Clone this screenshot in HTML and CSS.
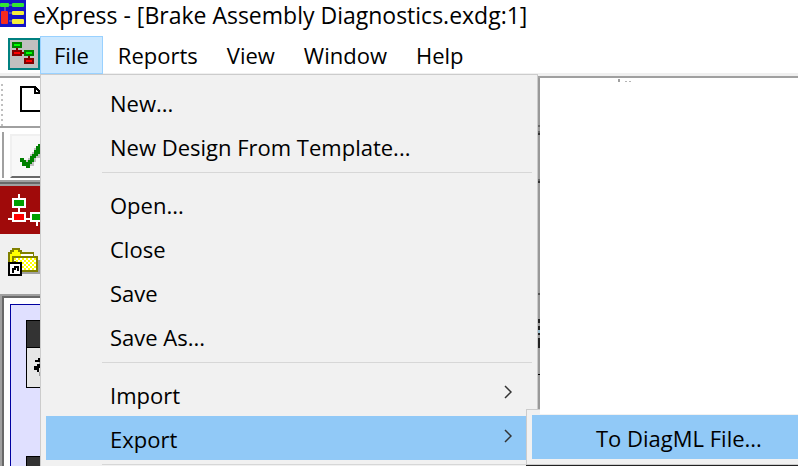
FILE: index.html
```html
<!DOCTYPE html>
<html lang="en">
<head>
    <meta charset="UTF-8">
    <meta name="viewport" content="width=device-width, initial-scale=1.0">
    <title>eXpress - [Brake Assembly Diagnostics.exdg:1]</title>
    <link rel="stylesheet" href="styles.css">
</head>
<body>
    <div class="window">
        <header class="title-bar">
            <svg class="app-icon" width="26" height="28" viewBox="0 0 26 28" aria-hidden="true">
                <rect width="26" height="27" fill="#1414c8"/>
                <path d="M5 5v8M9 5h3M9 13h3M9 21h3" stroke="#8c8ca0" stroke-width="1"/>
                <rect x="0" y="3" width="9" height="4" rx="1" fill="#32e632"/>
                <rect x="12" y="3" width="12" height="4" rx="1" fill="#32e632"/>
                <rect x="1" y="11" width="7" height="13" rx="1" fill="#f52a1e"/>
                <rect x="12" y="11" width="12" height="4" rx="1" fill="#f5f03c"/>
                <rect x="12" y="19" width="12" height="5" rx="1" fill="#f5f03c"/>
            </svg>
            <h1>eXpress - [Brake Assembly Diagnostics.exdg:1]</h1>
        </header>

        <nav class="menu-bar">
            <svg class="doc-icon" width="32" height="32" viewBox="0 0 32 32" shape-rendering="crispEdges" aria-hidden="true">
                <rect x="1" y="1" width="30" height="30" fill="#c0c0c0" stroke="#008080" stroke-width="2"/>
                <path d="M9 10v4M14 15h4M21 18v3" fill="none" stroke="#800000" stroke-width="2"/>
                <rect x="5" y="5" width="8" height="4" fill="#00ff00" stroke="#008000" stroke-width="2"/>
                <rect x="5" y="13" width="8" height="4" fill="#ff0000" stroke="#800000" stroke-width="2"/>
                <rect x="17" y="13" width="8" height="4" fill="#00ff00" stroke="#008000" stroke-width="2"/>
                <rect x="17" y="21" width="8" height="4" fill="#ff0000" stroke="#800000" stroke-width="2"/>
            </svg>
            <div class="menu">
                <button class="menu-title active" type="button">File</button>
                <div class="dropdown">
                    <button class="item" type="button">New...</button>
                    <button class="item" type="button">New Design From Template...</button>
                    <hr>
                    <button class="item" type="button">Open...</button>
                    <button class="item" type="button">Close</button>
                    <button class="item" type="button">Save</button>
                    <button class="item" type="button">Save As...</button>
                    <hr>
                    <button class="item" type="button">Import
                        <svg width="8" height="14" viewBox="0 0 8 14"><path d="M1 1l6 6-6 6"/></svg>
                    </button>
                    <div class="submenu-holder">
                        <button class="item selected" type="button">Export
                            <svg width="8" height="14" viewBox="0 0 8 14"><path d="M1 1l6 6-6 6"/></svg>
                        </button>
                        <div class="submenu">
                            <button class="item selected" type="button">To DiagML File...</button>
                        </div>
                    </div>
                    <hr>
                </div>
            </div>
            <button class="menu-title" type="button">Reports</button>
            <button class="menu-title" type="button">View</button>
            <button class="menu-title" type="button">Window</button>
            <button class="menu-title" type="button">Help</button>
        </nav>

        <div class="bar-edge"></div>

        <main class="workspace">
            <div class="side">
                <div class="toolbar">
                    <span class="grip"></span>
                    <svg width="24" height="28" viewBox="0 0 24 28" shape-rendering="crispEdges" aria-hidden="true">
                        <path d="M24 27H1V3h14l6 6M15 3v6h6" fill="#fff" stroke="#000" stroke-width="2"/>
                    </svg>
                </div>
                <div class="toolbar checks">
                    <span class="divider"></span>
                    <button class="check-button" type="button" aria-label="Apply">
                        <svg width="24" height="28" viewBox="0 0 24 28" shape-rendering="crispEdges" aria-hidden="true">
                            <path d="M6 18h2v-2h2v-4h2v-2h2V6h2V4h2v6h4v4h-2v2h-4v4h-2v4h-4v2H8z" fill="#c0c0c0"/>
                            <path d="M0 16h4v2h2v2h2v-2h2v-4h2v-2h2V8h2V4h2V2h4v6h-2v4h-2v2h-2v2h-2v4h-2v2h-2v4H6v-2H2v-4H0z" fill="#008000"/>
                        </svg>
                    </button>
                </div>
                <div class="red-band">
                    <svg width="36" height="36" viewBox="0 0 36 36" shape-rendering="crispEdges" aria-hidden="true">
                        <path d="M11 0v22M0 25h32M29 20v12" fill="none" stroke="#fff" stroke-width="2"/>
                        <rect x="5" y="5" width="12" height="8" fill="#00a000" stroke="#fff" stroke-width="2"/>
                        <rect x="5" y="19" width="12" height="8" fill="#ff0000" stroke="#fff" stroke-width="2"/>
                        <rect x="23" y="19" width="12" height="8" fill="#00a000" stroke="#fff" stroke-width="2"/>
                    </svg>
                </div>
                <div class="folder-band">
                    <svg width="32" height="28" viewBox="0 0 32 28" shape-rendering="crispEdges" aria-hidden="true">
                        <defs>
                            <pattern id="dots" width="4" height="4" patternUnits="userSpaceOnUse">
                                <path d="M0 0h4v4H0z" fill="#fff"/><path d="M0 0h2v2H0zM2 2h2v2H2z" fill="#ff0"/>
                            </pattern>
                        </defs>
                        <path d="M30 12h2v14H14v-2h16z" fill="#a0a0a0"/>
                        <path d="M1 24V5h2V3h2V1h6v2h2v2h12v4h4" fill="#ff0" stroke="#808000" stroke-width="2"/>
                        <path d="M13 6h12v2H13z" fill="#fff"/>
                        <path d="M5 9h24v14H7v-9H5z" fill="url(#dots)" stroke="#808000" stroke-width="2"/>
                        <path d="M0 14h14v14H0z" fill="#000"/>
                        <path d="M2 16h10v10H2z" fill="#fff"/>
                        <path d="M5 25v-4h2v-2h3v4" fill="none" stroke="#000" stroke-width="2"/>
                    </svg>
                </div>
                <div class="diagram">
                    <div class="sheet">
                        <div class="node">
                            <div class="node-head"></div>
                            <svg width="14" height="38" viewBox="0 0 14 38" shape-rendering="crispEdges" aria-hidden="true">
                                <path d="M10 10h4v4h-4zM7 12h3v2H7zM6 18h3v-2h5v4h-3v4H9v-2H6zM11 24h3v2h-3z" fill="#000"/>
                                <path d="M11 14h2v2h-2zM9 24h2v4h2v2h1v-8h-2v2z" fill="#999"/>
                            </svg>
                        </div>
                        <div class="node">
                            <div class="node-head"></div>
                        </div>
                    </div>
                </div>
            </div>
            <div class="canvas">
                <svg width="14" height="4" viewBox="0 0 14 4" shape-rendering="crispEdges" aria-hidden="true">
                    <path d="M0 1h2v3H0z" fill="#a0a0a0"/>
                    <path d="M7 3h2v1H7zM11 3h2v1h-2z" fill="#b4b4b4"/>
                </svg>
            </div>
        </main>
    </div>
</body>
</html>
```
FILE: styles.css
```css
* {
    margin: 0;
    padding: 0;
    box-sizing: border-box;
}

body {
    font-family: 'Open Sans', 'Noto Sans', sans-serif;
    font-size: 22px;
    line-height: 30px;
    color: #000;
    background: #fff;
    overflow: hidden;
}

button {
    font: inherit;
    color: inherit;
    background: none;
    border: 0;
}

svg {
    display: block;
    flex: none;
}

.window {
    display: flex;
    flex-direction: column;
    height: 100vh;
}

.title-bar {
    display: flex;
    height: 36px;
    gap: 7px;
}

.title-bar h1 {
    font-size: 23px;
    font-weight: 400;
    white-space: nowrap;
}

/* Menu bar */
.menu-bar {
    display: flex;
    height: 37px;
    padding-left: 8px;
}

.doc-icon {
    margin-top: 2px;
}

.menu {
    position: relative;
}

.menu-title {
    height: 38px;
    padding: 0 13px;
    border: 1px solid transparent;
}

.menu-bar > .menu-title {
    margin-left: 1px;
}

.menu-title.active {
    background: #cce8ff;
    border-color: #99d1ff;
}

/* Dropdown */
.dropdown {
    position: absolute;
    z-index: 2;
    top: 38px;
    left: 0;
    width: 498px;
    padding: 5px;
    background: #f1f1f1;
    border: 1px solid #ccc;
    box-shadow: 2px 4px 0 #999;
}

/* bits of the window behind that show through the shadow */
.dropdown::after {
    content: '';
    position: absolute;
    top: 50px;
    left: 497px;
    width: 2px;
    height: 252px;
    background: linear-gradient(
        #666 0 2px, transparent 2px 6px, #666 6px 8px, #333 8px 10px,
        transparent 10px 54px, #666 54px 56px, #333 56px 58px,
        transparent 58px 168px, #555 168px 170px,
        transparent 170px 194px, #222 194px 198px, #999 198px 201px,
        #222 201px 205px, #9bc 205px 208px, #222 208px 210px,
        #999 210px 213px, #222 213px 223px, transparent 223px 249px,
        #000 249px 250px, transparent 250px);
}

.item {
    display: flex;
    align-items: center;
    justify-content: space-between;
    width: 100%;
    height: 44px;
    padding: 2px 20px 0 64px;
    text-align: left;
    white-space: nowrap;
}

.item.selected {
    background: #91c9f7;
}

.item svg {
    margin-bottom: 6px;
    fill: none;
    stroke: #333;
    stroke-width: 1.5;
}

.dropdown hr {
    height: 1px;
    margin: 4px 0 9px 56px;
    border: 0;
    background: #d7d7d7;
}

.submenu-holder {
    position: relative;
}

.submenu {
    position: absolute;
    z-index: 3;
    top: -7px;
    left: 480px;
    width: 272px;
    padding: 5px 0 5px 5px;
    background: #f1f1f1;
    border: 1px solid #ccc;
    border-right: 0;
    box-shadow: 0 2px 0 #222;
}

.submenu::after {
    content: '';
    position: absolute;
    top: -1px;
    left: 13px;
    right: 0;
    height: 5px;
    background: #fff;
}

/* Toolbars under the menu */
.bar-edge {
    height: 5px;
    margin-right: 9px;
    background: #f0f0f0;
    border-bottom: 2px solid #a0a0a0;
}

.workspace {
    display: flex;
    flex: 1;
    min-height: 0;
}

.side {
    display: flex;
    flex: none;
    flex-direction: column;
    width: 80px;
    overflow: hidden;
}

.canvas {
    padding-left: 538px;
}

.toolbar {
    display: flex;
    flex: none;
    height: 50px;
    padding-top: 6px;
    gap: 17px;
    border-bottom: 2px solid #a0a0a0;
}

.grip {
    width: 2px;
    height: 42px;
    margin-left: 1px;
    background: repeating-linear-gradient(#c0c0c0 0 2px, #fff 2px 5px);
}

.checks {
    height: 54px;
    padding: 4px 0 2px 2px;
    gap: 6px;
}

.divider {
    width: 2px;
    height: 46px;
    background: #a0a0a0;
}

.check-button {
    flex: none;
    width: 60px;
    height: 44px;
    margin-top: 2px;
    padding: 6px 8px;
    background: #f8f8f8;
    border: 2px solid #f0f0f0;
    border-bottom-color: #696969;
}

.red-band {
    flex: none;
    height: 52px;
    padding: 10px 8px;
    background: #a00a0a;
    border-top: 2px solid #696969;
    box-shadow: inset 0 2px 0 #a0a0a0;
}

.folder-band {
    flex: none;
    height: 60px;
    padding: 14px 8px;
    background: #f0f0f0;
}

.diagram {
    flex: 1;
    min-height: 0;
    padding: 8px 0 0 8px;
    border: 2px solid #a0a0a0;
    border-width: 2px 0 0 2px;
    box-shadow: inset 2px 2px 0 #696969;
}

.sheet {
    display: flex;
    flex-direction: column;
    gap: 68px;
    padding: 15px;
    background: #e0e0ff;
    border: 1px solid #0000a0;
}

.node {
    height: 68px;
    background: #e6e6e6;
    border: 1px solid #000;
}

.node-head {
    height: 27px;
    background: #333;
    border-bottom: 1px solid #000;
}

.node svg {
    margin-left: 1px;
}
```
